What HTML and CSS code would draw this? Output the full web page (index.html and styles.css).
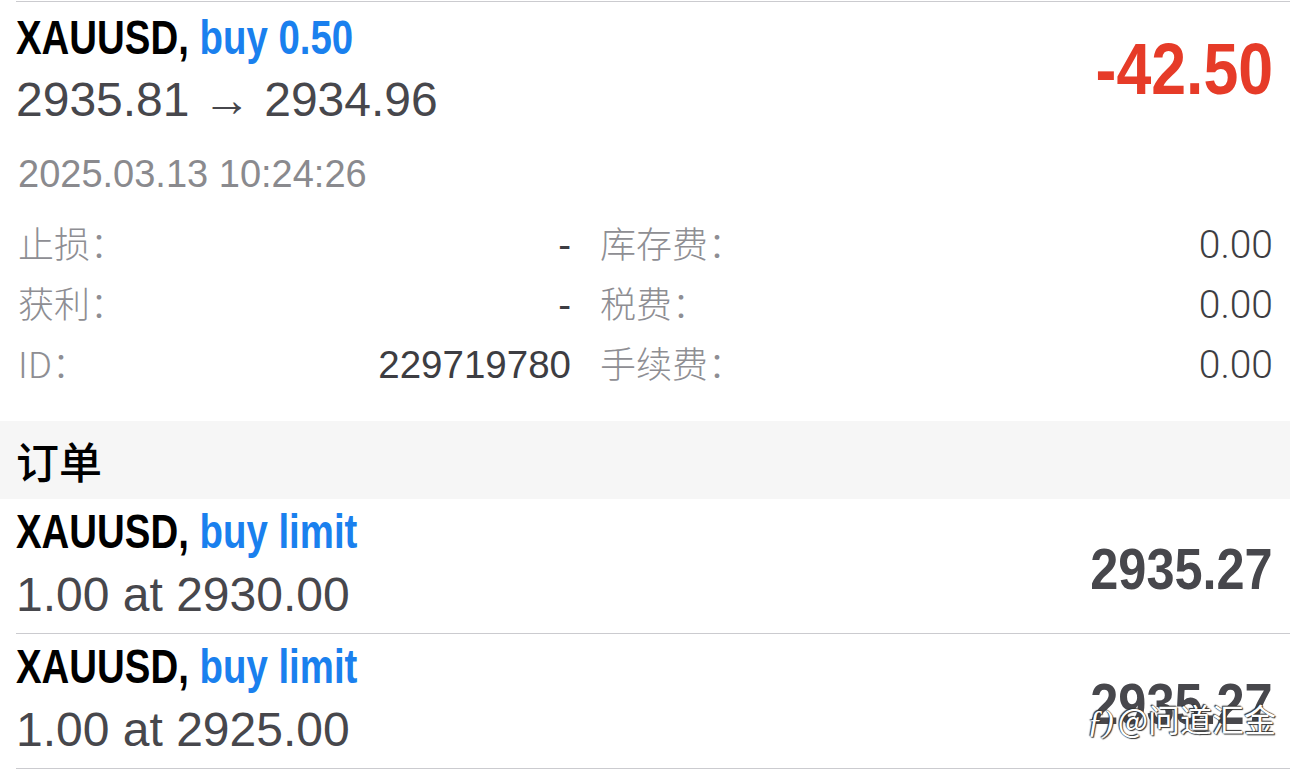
FILE: index.html
```html
<!DOCTYPE html>
<html lang="zh">
<head>
<meta charset="utf-8">
<title>Trade</title>
<link rel="stylesheet" href="styles.css">
</head>
<body>
<div class="list">
  <section class="position">
    <div class="pos-head">
      <div class="pos-main">
        <div class="title"><span class="cond"><span class="sym">XAUUSD,</span> <span class="side">buy 0.50</span></span></div>
        <div class="prices">2935.81 → 2934.96</div>
      </div>
      <div class="profit"><span class="cond-r">-42.50</span></div>
    </div>
    <div class="date">2025.03.13 10:24:26</div>
    <div class="details">
      <div class="col">
        <div class="kv"><span class="k">止损：</span><span class="v">-</span></div>
        <div class="kv"><span class="k">获利：</span><span class="v">-</span></div>
        <div class="kv"><span class="k">ID：</span><span class="v">229719780</span></div>
      </div>
      <div class="col">
        <div class="kv"><span class="k">库存费：</span><span class="v v-light">0.00</span></div>
        <div class="kv"><span class="k">税费：</span><span class="v v-light">0.00</span></div>
        <div class="kv"><span class="k">手续费：</span><span class="v v-light">0.00</span></div>
      </div>
    </div>
  </section>

  <div class="section-head">订单</div>

  <section class="order">
    <div class="order-main">
      <div class="title"><span class="cond"><span class="sym">XAUUSD,</span> <span class="side">buy limit</span></span></div>
      <div class="prices">1.00 at 2930.00</div>
    </div>
    <div class="order-price"><span class="cond-r">2935.27</span></div>
  </section>

  <section class="order">
    <div class="order-main">
      <div class="title"><span class="cond"><span class="sym">XAUUSD,</span> <span class="side">buy limit</span></span></div>
      <div class="prices">1.00 at 2925.00</div>
    </div>
    <div class="order-price"><span class="cond-r">2935.27</span></div>
    <div class="watermark"><span class="wm-logo">ƒ)</span>@问道汇金</div>
  </section>
</div>
</body>
</html>
```

FILE: styles.css
```css
html, body {
  margin: 0;
  padding: 0;
  background: #ffffff;
}

body {
  font-family: "Liberation Sans", Arial, "Noto Sans CJK SC", sans-serif;
  width: 1290px;
  height: 771px;
  overflow: hidden;
}

.list {
  padding-top: 1px;
}

.position {
  margin-left: 16px;
  border-top: 1px solid #cbcbcf;
  padding-top: 5px;
}

.pos-head {
  display: flex;
  justify-content: space-between;
  align-items: flex-start;
  padding-right: 17px;
}

.title {
  font-size: 48px;
  line-height: 62px;
  font-weight: 700;
  white-space: nowrap;
  color: #000000;
}

.cond {
  display: inline-block;
  transform: scaleX(0.80);
  transform-origin: left center;
}

.cond-r {
  display: inline-block;
  transform: scaleX(0.87);
  transform-origin: right center;
}

.side {
  color: #1a80ee;
}

.prices {
  font-size: 48px;
  line-height: 62px;
  color: #47474c;
  white-space: nowrap;
}

.profit {
  font-size: 72px;
  line-height: 80px;
  font-weight: 700;
  color: #e63b28;
  margin-top: 22px;
}

.date {
  font-size: 38px;
  line-height: 50px;
  color: #8a8a8e;
  margin-top: 18px;
  padding-left: 2px;
}

.details {
  display: grid;
  grid-template-columns: 553px 673px;
  column-gap: 29px;
  margin-top: 13px;
  padding-left: 2px;
  margin-bottom: 29px;
}

.kv {
  display: flex;
  justify-content: space-between;
  align-items: baseline;
  height: 60px;
  line-height: 60px;
}

.k {
  font-family: "Noto Sans CJK SC", "Liberation Sans", sans-serif;
  font-weight: 300;
  font-size: 36px;
  color: #8e8e93;
}

.v {
  font-size: 38.5px;
  color: #3d3d42;
}

.v-light {
  font-family: Roboto, "Liberation Sans", sans-serif;
  font-weight: 300;
  font-size: 39px;
}

.section-head {
  background: #f6f6f6;
  height: 78px;
  line-height: 78px;
  padding-left: 16px;
  font-family: "Noto Sans CJK SC", sans-serif;
  font-weight: 500;
  font-size: 43px;
  color: #000000;
}

.order {
  position: relative;
  margin-left: 16px;
  padding-right: 17px;
  height: 135px;
  box-sizing: border-box;
  border-bottom: 1px solid #cbcbcf;
  display: flex;
  justify-content: space-between;
  align-items: center;
}

.order-main .title,
.order-main .prices {
  line-height: 63px;
}

.order-main {
  padding-bottom: 6px;
}

.order-price {
  font-size: 58px;
  font-weight: 700;
  color: #47474c;
  line-height: 70px;
  margin-top: 6px;
}

.watermark {
  position: absolute;
  right: 14px;
  top: 64px;
  font-family: "Noto Sans CJK SC", sans-serif;
  font-size: 32px;
  line-height: 40px;
  color: #ffffff;
  text-shadow: 0 0 1px #333, 1px 1px 1px #333, -1px -1px 1px #333;
  white-space: nowrap;
}

.wm-logo {
  font-family: "Liberation Serif", serif;
  font-style: italic;
  margin-right: 4px;
}
```
